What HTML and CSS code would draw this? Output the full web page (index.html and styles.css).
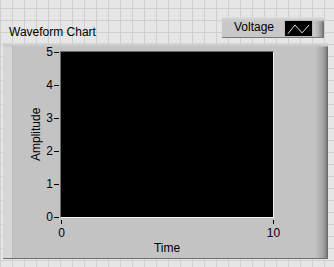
FILE: index.html
```html
<!DOCTYPE html>
<html>
<head>
<meta charset="utf-8">
<link rel="stylesheet" href="styles.css">
</head>
<body>
<div class="header">
  <div class="title">Waveform Chart</div>
  <div class="legend">
    <span class="legend-name">Voltage</span>
    <svg class="swatch" width="29" height="17" viewBox="0 0 29 17">
      <polyline points="2.5,14.5 10.5,4.5 18.5,13.5 26.5,4.5" fill="none" stroke="#fff" stroke-width="1"/>
    </svg>
  </div>
</div>
<div class="frame">
  <div class="chart">
    <div class="ytitle">Amplitude</div>
    <div class="yscale">
      <div class="ytick"><span>5</span><i></i></div>
      <div class="ytick"><span>4</span><i></i></div>
      <div class="ytick"><span>3</span><i></i></div>
      <div class="ytick"><span>2</span><i></i></div>
      <div class="ytick"><span>1</span><i></i></div>
      <div class="ytick"><span>0</span><i></i></div>
    </div>
    <div class="plotcol">
      <div class="plot"></div>
      <div class="xscale">
        <div class="xtick"><i></i><span>0</span></div>
        <div class="xtick"><i></i><span>10</span></div>
      </div>
      <div class="xtitle">Time</div>
    </div>
  </div>
</div>
</body>
</html>
```
FILE: styles.css
```css
html, body {
  margin: 0;
  padding: 0;
}
body {
  width: 334px;
  height: 267px;
  overflow: hidden;
  font-family: "Liberation Sans", Arial, sans-serif;
  font-size: 12px;
  line-height: 14px;
  color: #000;
  background-color: #e6e6e6;
  background-image:
    linear-gradient(to right, #d0d0d0 1px, transparent 1px),
    linear-gradient(to bottom, #d0d0d0 1px, transparent 1px);
  background-size: 12px 12px;
  background-position: 0 8px;
}
.header {
  display: flex;
  padding-top: 17px;
  height: 21px;
}
.title {
  margin: 8px 0 0 9px;
  white-space: nowrap;
}
.legend {
  margin-left: auto;
  margin-right: 10px;
  width: 102px;
  height: 21px;
  box-sizing: border-box;
  display: flex;
  align-items: flex-start;
  padding-left: 12px;
  background:
    linear-gradient(to bottom, #dedede 0, #cbcbcb 3px, transparent 5px),
    linear-gradient(to left, #707070 0, #707070 1px, #8c8c8c 2px, #b4b4b4 6px, #c8c8c8 10px);
  box-shadow: inset 0 -1px 0 #7a7a7a;
}
.legend-name {
  margin-top: 3px;
  white-space: nowrap;
}
.swatch {
  display: block;
  margin: 3px 0 0 10px;
  width: 29px;
  height: 17px;
  box-sizing: border-box;
  background: #000;
  border: 1px solid #b8b8b8;
}
.frame {
  margin: 5px 0 0 3px;
  width: 325px;
  height: 216px;
  box-sizing: border-box;
  padding: 8px 0 0 26px;
  background:
    linear-gradient(to bottom, #d8d8d8 0, #c6c6c6 3px, transparent 4px),
    linear-gradient(to right, #d6d6d6 0 9px, #bcbcbc 9px 10px, transparent 10px),
    linear-gradient(to left, #6c6c6c 0, #6c6c6c 1px, #8a8a8a 2px, #a8a8a8 6px, #c3c3c3 13px);
  box-shadow: inset 0 -1px 0 #6e6e6e;
}
.chart {
  display: flex;
  align-items: flex-start;
}
.ytitle {
  width: 14px;
  height: 167px;
  writing-mode: vertical-rl;
  transform: rotate(180deg);
  text-align: center;
  white-space: nowrap;
}
.yscale {
  width: 17px;
  height: 179px;
  margin-top: -6px;
  display: flex;
  flex-direction: column;
  justify-content: space-between;
}
.ytick {
  display: flex;
  align-items: flex-start;
  height: 14px;
}
.ytick span {
  width: 10px;
  text-align: right;
}
.ytick i {
  display: block;
  width: 5px;
  height: 1px;
  margin: 7px 0 0 1px;
  background: #000;
}
.plot {
  width: 214px;
  height: 167px;
  box-sizing: border-box;
  background: #000;
  border-style: solid;
  border-width: 1px;
  border-color: #6a6a6a #f2f2f2 #f2f2f2 #6a6a6a;
}
.xscale {
  display: flex;
  justify-content: space-between;
  margin-left: 1px;
  width: 213px;
}
.xtick {
  width: 1px;
  display: flex;
  flex-direction: column;
  align-items: center;
}
.xtick i {
  display: block;
  width: 1px;
  height: 4px;
  margin-top: 2px;
  background: #000;
}
.xtick span {
  margin-top: 2px;
  white-space: nowrap;
}
.xtitle {
  width: 214px;
  margin-top: 1px;
  text-align: center;
}
```
